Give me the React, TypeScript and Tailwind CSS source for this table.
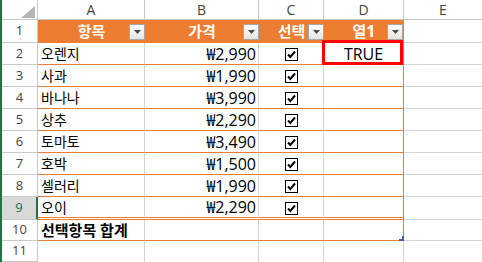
import React from "react";

const items = [
  ["오렌지", "₩2,990"],
  ["사과", "₩1,990"],
  ["바나나", "₩3,990"],
  ["상추", "₩2,290"],
  ["토마토", "₩3,490"],
  ["호박", "₩1,500"],
  ["셀러리", "₩1,990"],
  ["오이", "₩2,290"],
];

function RowHead({ n, active }: { n: number; active?: boolean }) {
  return (
    <div
      className={
        active
          ? "w-[36px] shrink-0 flex items-center justify-center bg-[#d9d9d9] border-b border-b-[#c8c8c8] border-r-2 border-r-[#217346] text-[13px] text-[#217346]"
          : "w-[36px] shrink-0 flex items-center justify-center border-b border-r border-[#c8c8c8] text-[13px] text-[#444]"
      }
    >
      {n}
    </div>
  );
}

function FilterBtn() {
  return (
    <div className="absolute right-0 top-[4px] w-[16px] h-[16px] border border-[#a6a6a6] bg-linear-to-b from-white to-[#e4e4e4] flex items-center justify-center">
      <svg width="7" height="4" viewBox="0 0 7 4">
        <polygon points="0,0 7,0 3.5,4" fill="#4a4a4a" />
      </svg>
    </div>
  );
}

function Check() {
  return (
    <svg width="13" height="13" viewBox="0 0 13 13" className="mt-[2px]">
      <rect x="0.5" y="0.5" width="12" height="12" fill="white" stroke="black" />
      <path d="M3 6.5 L5.3 9 L10 3.5" fill="none" stroke="black" strokeWidth="2" />
    </svg>
  );
}

export default function App() {
  return (
    <div className="w-[482px] h-[262px] overflow-hidden flex flex-col bg-white border-l-2 border-l-[#217346] font-['Open_Sans','Noto_Sans_CJK_KR',sans-serif] text-black">
      {/* column letters */}
      <div className="flex h-[20px] shrink-0">
        <div className="relative w-[36px] shrink-0 border-r border-b border-[#c8c8c8]">
          <svg width="14" height="12" viewBox="0 0 14 12" className="absolute right-[2px] bottom-[1px]">
            <polygon points="14,0 14,12 0,12" fill="#b4b4b4" />
          </svg>
        </div>
        {["A", "B", "C", "D"].map((c, i) => (
          <div
            key={c}
            className={
              "shrink-0 flex items-center justify-center border-r border-b border-[#c8c8c8] text-[14px] text-[#444] " +
              (i === 0 ? "w-[107px]" : i === 1 ? "w-[114px]" : i === 2 ? "w-[65px]" : "w-[80px]")
            }
          >
            {c}
          </div>
        ))}
        <div className="flex-1 flex items-center justify-center border-b border-[#c8c8c8] text-[14px] text-[#444]">E</div>
      </div>

      {/* table header */}
      <div className="flex h-[23px] shrink-0">
        <RowHead n={1} />
        <div className="relative w-[107px] shrink-0 flex items-center justify-center bg-[#ED7D31] border-b border-b-[#ED7D31] text-white font-bold text-[15px]">
          항목
          <FilterBtn />
        </div>
        <div className="relative w-[114px] shrink-0 flex items-center justify-center bg-[#ED7D31] border-b border-b-[#ED7D31] text-white font-bold text-[15px]">
          가격
          <FilterBtn />
        </div>
        <div className="relative w-[65px] shrink-0 flex items-center justify-center bg-[#ED7D31] border-b border-b-[#ED7D31] text-white font-bold text-[15px]">
          선택
          <FilterBtn />
        </div>
        <div className="relative w-[80px] shrink-0 flex items-center justify-center bg-[#ED7D31] border-b border-b-[#ED7D31] text-white font-bold text-[15px]">
          열<span className="text-[16px]">1</span>
          <div className="absolute right-px top-[4px] w-[16px] h-[16px] border border-[#a6a6a6] bg-linear-to-b from-white to-[#e4e4e4] flex items-center justify-center">
            <svg width="7" height="4" viewBox="0 0 7 4">
              <polygon points="0,0 7,0 3.5,4" fill="#4a4a4a" />
            </svg>
          </div>
        </div>
        <div className="flex-1 border-b border-[#d4d4d4]" />
      </div>

      {items.map(([name, price], i) => {
        const last = i === items.length - 1;
        return (
          <div key={name} className={last ? "flex h-[23px] shrink-0" : "flex h-[22px] shrink-0"}>
            <RowHead n={i + 2} active={last} />
            <div
              className={
                last
                  ? "w-[107px] shrink-0 flex items-center pl-[3px] border-r border-r-[#d4d4d4] border-b-[3px] border-double border-b-[#ED7D31] text-[14px]"
                  : "w-[107px] shrink-0 flex items-center pl-[3px] border-r border-r-[#d4d4d4] border-b border-b-[#ED7D31] text-[14px]"
              }
            >
              {name}
            </div>
            <div
              className={
                last
                  ? "w-[114px] shrink-0 flex items-center justify-end pr-[2px] border-r border-r-[#d4d4d4] border-b-[3px] border-double border-b-[#ED7D31] text-[16px]"
                  : "w-[114px] shrink-0 flex items-center justify-end pr-[2px] border-r border-r-[#d4d4d4] border-b border-b-[#ED7D31] text-[16px]"
              }
            >
              {price}
            </div>
            <div
              className={
                last
                  ? "w-[65px] shrink-0 flex items-center justify-center border-r border-r-[#d4d4d4] border-b-[3px] border-double border-b-[#ED7D31]"
                  : "w-[65px] shrink-0 flex items-center justify-center border-r border-r-[#d4d4d4] border-b border-b-[#ED7D31]"
              }
            >
              <Check />
            </div>
            <div
              className={
                last
                  ? "relative w-[80px] shrink-0 border-r border-r-[#ED7D31] border-b-[3px] border-double border-b-[#ED7D31]"
                  : "relative w-[80px] shrink-0 flex items-center justify-center border-r border-r-[#ED7D31] border-b border-b-[#ED7D31] text-[16px]"
              }
            >
              {i === 0 && (
                <>
                  TRUE
                  <div className="absolute left-[-2px] top-[-3px] w-[81px] h-[25px] border-[3px] border-[#ff0000]" />
                </>
              )}
            </div>
            <div className="flex-1 border-b border-[#d4d4d4]" />
          </div>
        );
      })}

      {/* total row */}
      <div className="flex h-[21px] shrink-0">
        <RowHead n={10} />
        <div className="w-[107px] shrink-0 flex items-center pl-[3px] border-r border-r-[#d4d4d4] border-b border-b-[#ED7D31] font-bold text-[15px] whitespace-nowrap overflow-visible">
          선택항목 합계
        </div>
        <div className="w-[114px] shrink-0 border-r border-r-[#d4d4d4] border-b border-b-[#ED7D31]" />
        <div className="w-[65px] shrink-0 border-r border-r-[#d4d4d4] border-b border-b-[#ED7D31]" />
        <div className="relative w-[80px] shrink-0 border-r border-r-[#ED7D31] border-b border-b-[#ED7D31]">
          <svg width="5" height="5" viewBox="0 0 5 5" className="absolute right-[-1px] bottom-[-1px]">
            <polygon points="5,0 5,5 0,5 0,3 3,3 3,0" fill="#4b5bb3" />
          </svg>
        </div>
        <div className="flex-1 border-b border-[#d4d4d4]" />
      </div>

      <div className="flex flex-1">
        <RowHead n={11} />
        <div className="w-[107px] shrink-0 border-r border-[#d4d4d4]" />
        <div className="w-[114px] shrink-0 border-r border-[#d4d4d4]" />
        <div className="w-[65px] shrink-0 border-r border-[#d4d4d4]" />
        <div className="w-[80px] shrink-0 border-r border-[#d4d4d4]" />
        <div className="flex-1" />
      </div>
    </div>
  );
}
